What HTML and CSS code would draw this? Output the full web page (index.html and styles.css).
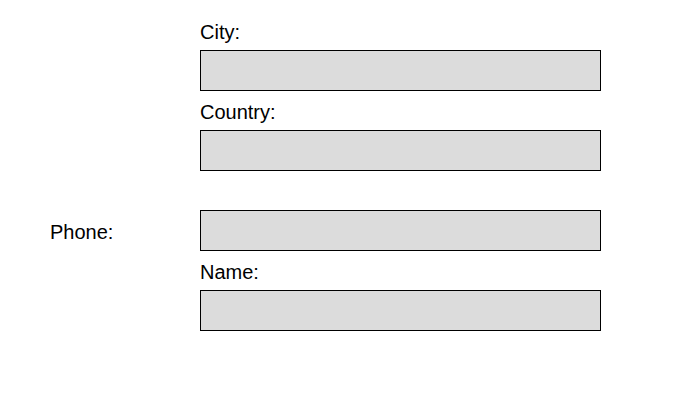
FILE: index.html
```html
<!DOCTYPE html>
<html>
<head>
<meta charset="utf-8">
<link rel="stylesheet" href="styles.css">
</head>
<body>
<div class="form">
  <div class="label-top">City:</div>
  <div class="input"></div>
  <div class="label-top">Country:</div>
  <div class="input"></div>
  <div class="spacer"></div>
  <div class="label-side">Phone:</div>
  <div class="input"></div>
  <div class="label-top">Name:</div>
  <div class="input"></div>
</div>
</body>
</html>
```
FILE: styles.css
```css
html, body {
  margin: 0;
  background: #ffffff;
}
.form {
  display: grid;
  grid-template-columns: 150px 401px;
  padding: 19px 0 0 50px;
  font-family: "Liberation Sans", Arial, sans-serif;
  font-size: 20px;
  color: #000;
}
.label-top {
  grid-column: 2;
  height: 23px;
  line-height: 23px;
  padding-top: 2px;
  margin-bottom: 6px;
}
.label-side {
  grid-column: 1;
  height: 41px;
  box-sizing: border-box;
  padding-top: 4px;
  line-height: 37px;
}
.input {
  grid-column: 2;
  height: 41px;
  box-sizing: border-box;
  border: 1px solid #000;
  background: #dcdcdc;
  margin-bottom: 8px;
}
.spacer {
  grid-column: 1 / span 2;
  height: 31px;
}
```
